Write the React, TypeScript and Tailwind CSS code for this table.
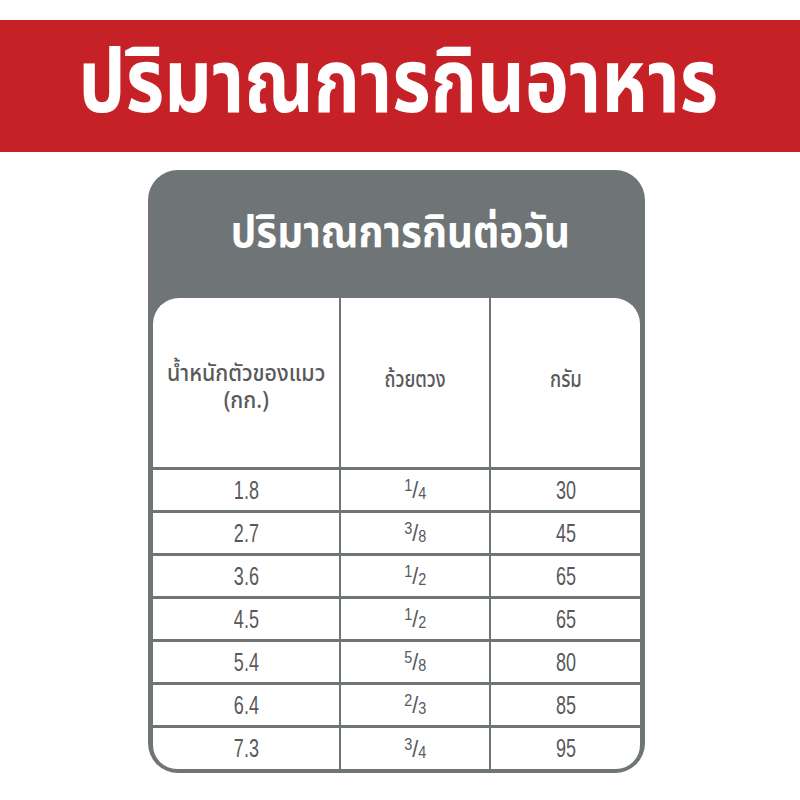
const rows = [
  { kg: '1.8', cup: ['1', '4'], g: '30' },
  { kg: '2.7', cup: ['3', '8'], g: '45' },
  { kg: '3.6', cup: ['1', '2'], g: '65' },
  { kg: '4.5', cup: ['1', '2'], g: '65' },
  { kg: '5.4', cup: ['5', '8'], g: '80' },
  { kg: '6.4', cup: ['2', '3'], g: '85' },
  { kg: '7.3', cup: ['3', '4'], g: '95' },
];

const thai = { fontFamily: '"Noto Sans Thai", "Noto Sans Thai Looped", Loma, Garuda, "Noto Sans", sans-serif' };

function Num({ children }: { children: React.ReactNode }) {
  return (
    <span className="inline-block scale-x-[0.72] font-['Liberation_Sans',sans-serif] text-[25px] leading-none">
      {children}
    </span>
  );
}

export default function App() {
  return (
    <div className="h-[800px] w-[800px] bg-white pt-[20px]" style={thai}>
      <div className="flex h-[132px] items-center justify-center bg-[#c62127]">
        <h1 className="mr-[4px] inline-block scale-x-[0.843] text-[88px] font-bold leading-none text-white">ปริมาณการกินอาหาร</h1>
      </div>

      <div className="ml-[148px] mt-[18px] w-[497px] rounded-[30px] bg-[#6f7476] px-[5px] pb-[4px]">
        <div className="flex h-[128px] items-center justify-center">
          <h2 className="ml-[8px] inline-block scale-x-[0.915] text-[44px] font-bold leading-none text-white">ปริมาณการกินต่อวัน</h2>
        </div>
        <div className="overflow-hidden rounded-t-[26px] rounded-b-[24px] bg-white">
          <div className="grid grid-cols-[188px_150px_1fr] text-[#58595b]">
            <div className="flex h-[172px] flex-col items-center justify-center border-r-2 border-b-[3px] border-[#6f7476] pt-[10px] text-[23px] font-medium leading-[27px]">
              <span className="inline-block scale-x-[0.93]">น้ำหนักตัวของแมว</span>
              <span className="inline-block scale-x-[0.93]">(กก.)</span>
            </div>
            <div className="flex h-[172px] items-center justify-center border-r-2 border-b-[3px] border-[#6f7476] pb-[4px] text-[23px] font-medium">
              <span className="inline-block scale-x-[0.78]">ถ้วยตวง</span>
            </div>
            <div className="flex h-[172px] items-center justify-center border-b-[3px] border-[#6f7476] pb-[4px] text-[23px] font-medium">
              <span className="inline-block scale-x-[0.8]">กรัม</span>
            </div>
            {rows.map((r, i) => {
              const last = i === rows.length - 1;
              const b = last ? 'h-[41px]' : 'h-[43px] border-b-[3px]';
              return [
                <div key={`a${i}`} className={`flex items-center justify-center border-r-2 border-[#6f7476] ${b}`}>
                  <Num>{r.kg}</Num>
                </div>,
                <div key={`b${i}`} className={`flex items-center justify-center border-r-2 border-[#6f7476] ${b}`}>
                  <span className="inline-flex scale-x-[0.9] items-start font-['Liberation_Sans',sans-serif] leading-none">
                    <span className="text-[16px]">{r.cup[0]}</span>
                    <span className="text-[24px]">/</span>
                    <span className="mt-[8px] text-[16px]">{r.cup[1]}</span>
                  </span>
                </div>,
                <div key={`c${i}`} className={`flex items-center justify-center border-[#6f7476] ${b}`}>
                  <Num>{r.g}</Num>
                </div>,
              ];
            })}
          </div>
        </div>
      </div>
    </div>
  );
}
